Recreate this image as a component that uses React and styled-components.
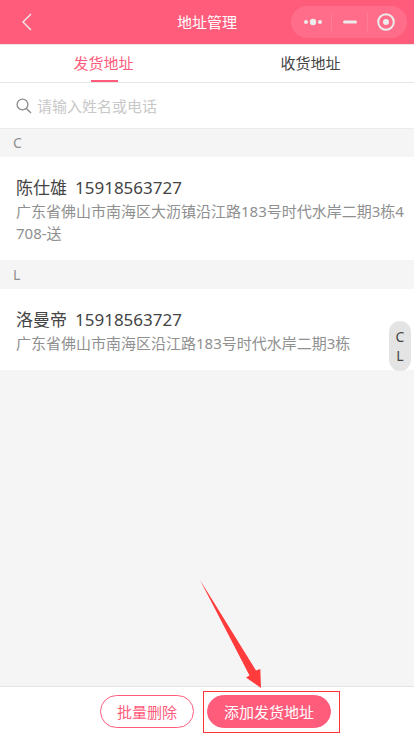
import styled, { createGlobalStyle } from "styled-components";
import { useState } from "react";

const contacts = [
  {
    letter: "C",
    name: "陈仕雄",
    phone: "15918563727",
    address: "广东省佛山市南海区大沥镇沿江路183号时代水岸二期3栋4708-送",
  },
  {
    letter: "L",
    name: "洛曼帝",
    phone: "15918563727",
    address: "广东省佛山市南海区沿江路183号时代水岸二期3栋",
  },
];

const tabs = ["发货地址", "收货地址"];

function App() {
  const [activeTab, setActiveTab] = useState(tabs[0]);
  const [search, setSearch] = useState("");

  const visible = contacts.filter(
    (contact) => contact.name.includes(search) || contact.phone.includes(search)
  );

  return (
    <AppContainer>
      <GlobalStyle />
      <Header>
        <BackButton aria-label="返回">
          <svg width="12" height="18" viewBox="0 0 12 18" fill="none">
            <path d="M10 1 2 9l8 8" stroke="#ececec" strokeWidth="1.4" />
          </svg>
        </BackButton>
        <Title>地址管理</Title>
        <Capsule>
          <CapsuleButton aria-label="更多">
            <svg width="20" height="8" viewBox="0 0 20 8" fill="#ececec">
              <circle cx="3" cy="4" r="2" />
              <circle cx="10" cy="4" r="3.2" />
              <circle cx="17" cy="4" r="2" />
            </svg>
          </CapsuleButton>
          <CapsuleButton aria-label="最小化">
            <svg width="16" height="4" viewBox="0 0 16 4" fill="#ececec">
              <rect x="1" y="0.5" width="14" height="3" rx="1.5" />
            </svg>
          </CapsuleButton>
          <CapsuleButton aria-label="关闭">
            <svg width="18" height="18" viewBox="0 0 18 18" fill="none">
              <circle cx="9" cy="9" r="7.8" stroke="#ececec" strokeWidth="2" />
              <circle cx="9" cy="9" r="3" fill="#ececec" />
            </svg>
          </CapsuleButton>
        </Capsule>
      </Header>
      <Tabs role="tablist">
        {tabs.map((tab) => (
          <Tab
            key={tab}
            role="tab"
            aria-selected={activeTab === tab}
            $active={activeTab === tab}
            onClick={() => setActiveTab(tab)}
          >
            {tab}
          </Tab>
        ))}
      </Tabs>
      <SearchBar>
        <svg width="16" height="16" viewBox="0 0 16 16" fill="none">
          <circle cx="6.5" cy="6.5" r="5.4" stroke="#8c8c8c" strokeWidth="1.3" />
          <path d="M10.4 10.4 15 15" stroke="#8c8c8c" strokeWidth="1.4" />
        </svg>
        <SearchInput
          type="text"
          aria-label="搜索"
          placeholder="请输入姓名或电话"
          value={search}
          onChange={(event) => setSearch(event.target.value)}
        />
      </SearchBar>
      <List>
        {visible.map((contact) => (
          <section key={contact.letter} id={contact.letter}>
            <Letter>{contact.letter}</Letter>
            <Card>
              <Person>
                <span>{contact.name}</span>
                <span>{contact.phone}</span>
              </Person>
              <Address>{contact.address}</Address>
            </Card>
          </section>
        ))}
      </List>
      <IndexBar>
        {contacts.map((contact) => (
          <a key={contact.letter} href={`#${contact.letter}`}>
            {contact.letter}
          </a>
        ))}
      </IndexBar>
      <Footer>
        <Button>批量删除</Button>
        <Highlight>
          <Button $primary>添加发货地址</Button>
          <Frame />
          <Arrow width="62" height="109" viewBox="0 0 62 109">
            <path d="M0 0 56 90.5 60.3 89 61 108 46 97.5 49.5 95.5Z" fill="#ff3b3b" />
          </Arrow>
        </Highlight>
      </Footer>
    </AppContainer>
  );
}

export default App;

const GlobalStyle = createGlobalStyle`
  * {
    box-sizing: border-box;
  }

  body {
    margin: 0;
    background-color: #f5f5f5;
  }

  body, button, input {
    font-family: "Noto Sans", "Noto Sans CJK SC", sans-serif;
    font-size: 15px;
  }

  button {
    padding: 0;
    border: none;
    background: none;
    cursor: pointer;
  }

  svg {
    display: block;
  }
`;

const AppContainer = styled.div`
  min-height: 100vh;
  display: flex;
  flex-direction: column;
`;

const Header = styled.header`
  height: 44px;
  display: grid;
  grid-template-columns: 1fr auto 1fr;
  align-items: center;
  padding: 0 7px 0 16px;
  background-color: #ff5c7c;
`;

const BackButton = styled.button`
  justify-self: start;
  padding: 4px 5px;
`;

const Title = styled.h1`
  margin: 0;
  padding-right: 9px;
  color: #fff;
  font-size: 15px;
  font-weight: 400;
  line-height: 20px;
`;

const Capsule = styled.div`
  justify-self: end;
  width: 116px;
  height: 32px;
  display: flex;
  align-items: center;
  padding: 0 3px 0 4px;
  border-radius: 16px;
  background-color: #ff6d8a;
`;

const CapsuleButton = styled.button`
  flex: 1;
  height: 18px;
  display: flex;
  align-items: center;
  justify-content: center;

  & + & {
    border-left: 1px solid #ff7e97;
  }
`;

const Tabs = styled.div`
  height: 39px;
  display: grid;
  grid-template-columns: 1fr 1fr;
  border-top: 1px solid #e8e8e8;
  border-bottom: 1px solid #e5e5e5;
  background-color: #fff;
`;

const Tab = styled.button`
  position: relative;
  color: ${(props) => (props.$active ? "#ff5c7c" : "#444")};
  line-height: 37px;

  &::after {
    content: "";
    display: ${(props) => (props.$active ? "block" : "none")};
    position: absolute;
    bottom: 0;
    left: 50%;
    width: 27px;
    height: 2px;
    margin-left: -13px;
    background-color: #ff5c7c;
  }
`;

const SearchBar = styled.label`
  position: relative;
  height: 45px;
  display: flex;
  align-items: center;
  gap: 5px;
  padding: 0 16px;
  background-color: #fff;
  box-shadow: 0 1px #ececec;
`;

const SearchInput = styled.input`
  flex: 1;
  min-width: 0;
  padding: 0;
  border: none;
  outline: none;
  color: #444;

  &::placeholder {
    color: #c8c8c8;
  }
`;

const List = styled.main`
  flex: 1;
`;

const Letter = styled.h2`
  margin: 0;
  padding-left: 13px;
  color: #909090;
  background-color: #f5f5f5;
  font-size: 14px;
  font-weight: 400;
  line-height: 29px;
`;

const Card = styled.article`
  padding: 19px 8px 16px 16px;
  background-color: #fff;
`;

const Person = styled.div`
  display: flex;
  gap: 8px;
  color: #444;
  font-size: 17px;
  line-height: 24px;
`;

const Address = styled.p`
  margin: 0;
  color: #909090;
  line-height: 22px;
  word-break: break-all;
`;

const IndexBar = styled.nav`
  position: fixed;
  top: calc(50% - 47px);
  right: 3px;
  width: 22px;
  display: flex;
  flex-direction: column;
  padding: 6px 0;
  border-radius: 11px;
  background-color: #e4e4e4;

  a {
    color: #444;
    font-size: 14px;
    line-height: 19px;
    text-align: center;
    text-decoration: none;
  }
`;

const Footer = styled.footer`
  position: sticky;
  bottom: 0;
  height: 50px;
  display: flex;
  align-items: center;
  justify-content: center;
  gap: 13px;
  padding-left: 17px;
  border-top: 1px solid #e5e5e5;
  background-color: #fff;
`;

const Button = styled.button`
  display: block;
  height: 33px;
  padding: 1px 16px 0;
  border: 1px solid #ff5c7c;
  border-radius: 17px;
  color: ${(props) => (props.$primary ? "#fff" : "#ff5c7c")};
  background-color: ${(props) => (props.$primary ? "#ff5c7c" : "#fff")};
  line-height: 31px;
`;

const Highlight = styled.div`
  position: relative;
`;

const Frame = styled.span`
  position: absolute;
  inset: -4px -9px -5px -4px;
  border: 1px solid #f33;
  pointer-events: none;
`;

const Arrow = styled.svg`
  position: absolute;
  left: -7px;
  bottom: 39px;
  pointer-events: none;
`;
